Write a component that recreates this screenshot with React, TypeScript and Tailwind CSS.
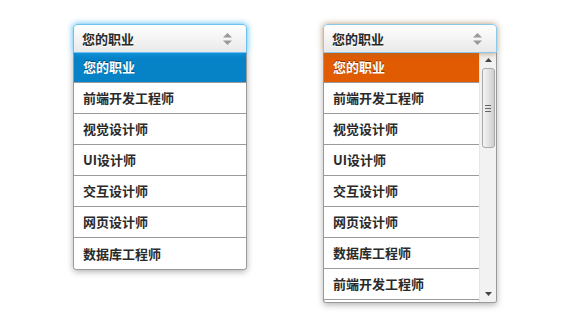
import React from "react";

const items = ["前端开发工程师", "视觉设计师", "UI设计师", "交互设计师", "网页设计师", "数据库工程师"];

const font = { fontFamily: '"Noto Sans CJK SC", "Noto Sans", sans-serif' };

function Arrows() {
  return (
    <svg width="9" height="12" viewBox="0 0 9 12" className="shrink-0">
      <polygon points="4.5,0 9,4.5 0,4.5" fill="#9a9a9a" />
      <polygon points="0,7.5 9,7.5 4.5,12" fill="#9a9a9a" />
    </svg>
  );
}

function Header({ variant }: { variant: "blue" | "orange" }) {
  const cls =
    variant === "blue"
      ? "border-[#6ec3ee] shadow-[0_0_6px_rgba(40,170,240,0.9)]"
      : "border-[#8cc8ea] shadow-[0_0_6px_rgba(150,105,60,0.7)]";
  return (
    <div
      className={`relative z-10 flex h-[29px] items-center justify-between rounded-t-[4px] border bg-gradient-to-b from-white to-[#e9e9e9] pl-[8px] pr-[14px] ${cls}`}
    >
      <span className="text-[13px] font-bold text-[#2a2a2a] [text-shadow:0_1px_0_#fff]">您的职业</span>
      <Arrows />
    </div>
  );
}

function Row({ label, active, color, last }: { label: string; active?: boolean; color?: string; last?: boolean }) {
  return (
    <div
      className={`flex h-[31px] shrink-0 items-center pl-[9px] text-[13px] font-bold ${
        last ? "" : "border-b border-[#9a9a9a]"
      } ${active ? "text-white [text-shadow:0_-1px_0_rgba(0,0,0,0.45)]" : "bg-white text-[#2a2a2a]"}`}
      style={active ? { backgroundColor: color } : undefined}
    >
      {label}
    </div>
  );
}

function Scrollbar() {
  return (
    <div className="flex w-[17px] shrink-0 flex-col items-center border-l border-[#e6e6e6] bg-[#f2f2f2]">
      <div className="flex h-[16px] items-center justify-center">
        <svg width="7" height="4" viewBox="0 0 7 4">
          <polygon points="3.5,0 7,4 0,4" fill="#444" />
        </svg>
      </div>
      <div className="flex h-[80px] w-[13px] flex-col items-center justify-center gap-[2px] rounded-[3px] border border-[#a9a9a9] bg-gradient-to-r from-[#f4f4f4] via-[#e2e2e2] to-[#cfcfcf]">
        <div className="h-px w-[6px] bg-[#666]" />
        <div className="h-px w-[6px] bg-[#666]" />
        <div className="h-px w-[6px] bg-[#666]" />
      </div>
      <div className="flex-1" />
      <div className="flex h-[16px] items-center justify-center">
        <svg width="7" height="4" viewBox="0 0 7 4">
          <polygon points="0,0 7,0 3.5,4" fill="#444" />
        </svg>
      </div>
    </div>
  );
}

export default function App() {
  return (
    <div className="h-[326px] w-[576px] bg-white" style={font}>
      <div className="flex gap-[76px] pl-[73px] pt-[24px]">
        <div className="w-[174px]">
          <Header variant="blue" />
          <div className="-mt-px flex flex-col overflow-hidden rounded-b-[4px] border-x border-b border-[#999] bg-white shadow-[0_2px_6px_rgba(0,0,0,0.3)]">
            <Row label="您的职业" active color="#0682c7" />
            {items.map((t, i) => (
              <Row key={t} label={t} last={i === items.length - 1} />
            ))}
          </div>
        </div>
        <div className="w-[174px]">
          <Header variant="orange" />
          <div className="-mt-px flex h-[251px] overflow-hidden rounded-b-[3px] border-x border-b border-[#999] bg-white shadow-[0_2px_6px_rgba(0,0,0,0.3)]">
            <div className="flex min-w-0 flex-1 flex-col overflow-hidden">
              <Row label="您的职业" active color="#e05b02" />
              {items.map((t) => (
                <Row key={t} label={t} />
              ))}
              <Row label="前端开发工程师" />
            </div>
            <Scrollbar />
          </div>
        </div>
      </div>
    </div>
  );
}
